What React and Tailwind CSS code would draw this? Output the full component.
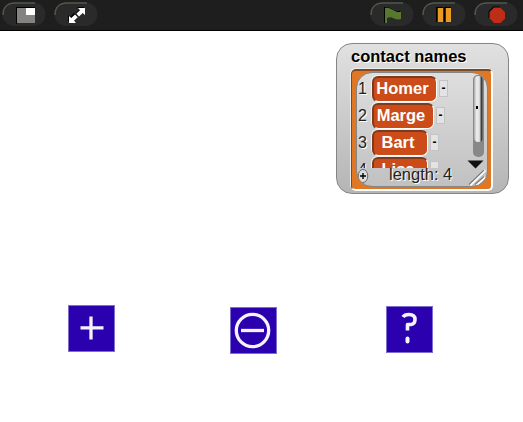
const contacts = [
  { name: "Homer", width: "w-[65px]" },
  { name: "Marge", width: "w-[62px]" },
  { name: "Bart", width: "w-[56px]" },
  { name: "Lisa", width: "w-[56px]" },
];

function ToolButton({ label, children }) {
  return (
    <button aria-label={label} className="h-[25px] w-[44px] shrink-0">
      <svg width="44" height="25" viewBox="0 0 44 25">
        <rect x="0.5" y="0.5" width="43" height="23.5" rx="12" fill="#2a2a2a" />
        <path d="M1 13C1 5 6 1 13 1H33" fill="none" stroke="#50584b" strokeWidth="1.5" />
        {children}
      </svg>
    </button>
  );
}

function Toolbar() {
  return (
    <header className="flex h-[31px] items-start justify-between border-b border-black bg-[#1e1e1e] pt-[2px] pr-[5px] pl-[2px]">
      <div className="flex gap-2">
        <ToolButton label="Stage size">
          <path d="M14 5h19v1H15v16h-1z" fill="#000" />
          <path d="M15 6h18v15H15z" fill="#858381" />
          <path d="M24 6h9v7h-9z" fill="#fff" />
        </ToolButton>
        <ToolButton label="Full screen">
          <path d="M23 5h7v7l-2-2-4 4-2.500-2.500 4-4zM14 13l2 2 4-4 2.500 2.500-4 4 2 2h-6.500z" fill="#000" />
          <path d="M24 6h7v7l-2.300-2-3.700 3.500-2.700-2.700 3.700-3.500zM15 14l2.300 2 3.700-3.500 2.700 2.700-3.700 3.500 2 2.300h-7z" fill="#fff" />
        </ToolButton>
      </div>
      <div className="flex gap-2">
        <ToolButton label="Start">
          <path d="M14 5h2c4-1 7 5 14 4v1H16v11h-2z" fill="#000" />
          <path d="M15 6c6-2 9 5 16 4v7c-6 2-9-4-14-1v5h-2z" fill="#58782d" />
        </ToolButton>
        <ToolButton label="Pause">
          <path d="M14 5h7v1h-6v14h-1zM22 5h7v1h-6v14h-1z" fill="#000" />
          <path d="M16 6h5v14h-5zM24 6h5v14h-5z" fill="#e99a23" />
        </ToolButton>
        <ToolButton label="Stop">
          <path d="M19.500 4.500h6l5 5v6l-5 5h-6l-5-5v-6z" fill="#000" />
          <path d="M20 5.500h6.500l4.500 4.500v6.500l-4.500 4.500h-6.500l-4.500-4.500v-6.500z" fill="#bd2e18" />
        </ToolButton>
      </div>
    </header>
  );
}

function Row({ index, name, width }) {
  return (
    <li className="flex h-[27px] shrink-0 items-start">
      <span className="w-[15px] pt-[2px] pl-[1px] text-[16px] leading-[22px] text-[#222] [text-shadow:1px_1px_0_#fff]">{index}</span>
      <span
        className={`${width} h-[26px] shrink-0 rounded-[6px] border-t-2 border-r border-b border-l-2 border-t-[#7d3a1f] border-r-white border-b-white border-l-[#7d3a1f] bg-[#cb4c18] pr-[5px] text-center text-[16.5px] leading-[21px] font-bold text-white shadow-[-1px_-1px_0_#eee]`}
      >
        {name}
      </span>
      <span className="mt-[4px] ml-[2px] h-[17px] w-[9px] shrink-0 border border-[#c3c3c3] bg-[#e3e3e3] text-center text-[12px] leading-[15px] font-bold">
        {name === "Lisa" ? "" : "-"}
      </span>
    </li>
  );
}

function ListWatcher() {
  return (
    <section className="ml-[336px] h-[151px] w-[173px] rounded-[16px] border border-[#858585] bg-linear-to-b from-[#e1e1e1] to-[#b5b5b5] pt-[3px] pl-[14px]">
      <h1 className="h-[22px] text-[16.5px] leading-[19px] font-bold whitespace-nowrap [text-shadow:1px_1px_0_#fff]">
        contact names
      </h1>
      <div className="h-[122px] w-[142px] rounded-[5px] border-t-2 border-r-2 border-b-2 border-l border-t-[#7c4924] border-r-white border-b-white border-l-[#7c4924] bg-[#e07725] pt-[1px] pl-[4px] shadow-[-1px_-1px_0_#eee]">
        <div className="relative flex h-[115px] w-[132px] overflow-hidden rounded-[16px] border border-[#858585] bg-linear-to-b from-[#dedede] to-[#c1c1c1]">
          <ol className="flex h-[95px] w-[116px] flex-col overflow-hidden pt-[3px]">
            {contacts.map((c, i) => (
              <Row key={c.name} index={i + 1} name={c.name} width={c.width} />
            ))}
          </ol>
          <div className="mt-[2px] h-[82px] w-[11px] shrink-0 rounded-[5px] bg-[#888]">
            <div className="flex h-[68px] w-[11px] items-center rounded-[5px] border border-[#888] bg-[linear-gradient(to_right,#aaa_0%,#eee_30%,#ddd_60%,#333_85%,#888_100%)]">
              <span className="mb-[3px] ml-[2px] h-[3px] w-[2px] bg-black" />
            </div>
          </div>
          <svg className="absolute bottom-0 left-0" width="130" height="28" viewBox="0 0 130 28">
            <ellipse cx="6" cy="18" rx="4.800" ry="6.500" fill="#ddd" stroke="#666" />
            <path d="M3 18h6M6 15v6" stroke="#000" strokeWidth="1.400" />
            <path d="M110.500 2.500h16l-8 8z" fill="#111" />
            <path d="M113 27L128 12M119 27l9-8" stroke="#fff" strokeWidth="3" />
            <path d="M112 26.500L127 12M118 26.500l9-8" stroke="#777" strokeWidth="1.200" />
          </svg>
          <span className="absolute bottom-[3px] left-[32px] text-[16.5px] leading-[18px] whitespace-nowrap text-[#222] [text-shadow:1px_1px_0_#fff]">
            length: 4
          </span>
        </div>
      </div>
    </section>
  );
}

function Tile({ label, children }) {
  return (
    <button aria-label={label} className="h-[47px] w-[47px] border border-[#7d6fcd] bg-[#2b00ae]">
      <svg width="45" height="45" viewBox="1 1 45 45" fill="none" stroke="#f5f3fa" strokeWidth="3.300">
        {children}
      </svg>
    </button>
  );
}

export default function App() {
  return (
    <div className="flex h-[422px] w-[523px] flex-col overflow-hidden bg-white font-['Liberation_Sans',Arial,sans-serif] text-black">
      <Toolbar />
      <main className="flex flex-col pt-[12px]">
        <ListWatcher />
        <div className="mt-[111px] flex items-start pl-[68px]">
          <Tile label="Add contact">
            <path d="M12.500 22.800h23M23 11.500v23" />
          </Tile>
          <div className="mt-[2px] ml-[115px]">
            <Tile label="Remove contact">
              <circle cx="22.500" cy="23.500" r="16.200" />
              <path d="M11 23.500h23" />
            </Tile>
          </div>
          <div className="mt-[1px] ml-[109px]">
            <Tile label="Find contact">
              <path d="M17 11Q18.500 8.500 23 8.500Q29 8.500 29 13.500Q29 18 25 18.500H21.500V24.500" strokeWidth="3.600" strokeLinejoin="round" />
              <path d="M21.500 32.500v3" strokeWidth="4" strokeLinecap="round" />
            </Tile>
          </div>
        </div>
      </main>
    </div>
  );
}
